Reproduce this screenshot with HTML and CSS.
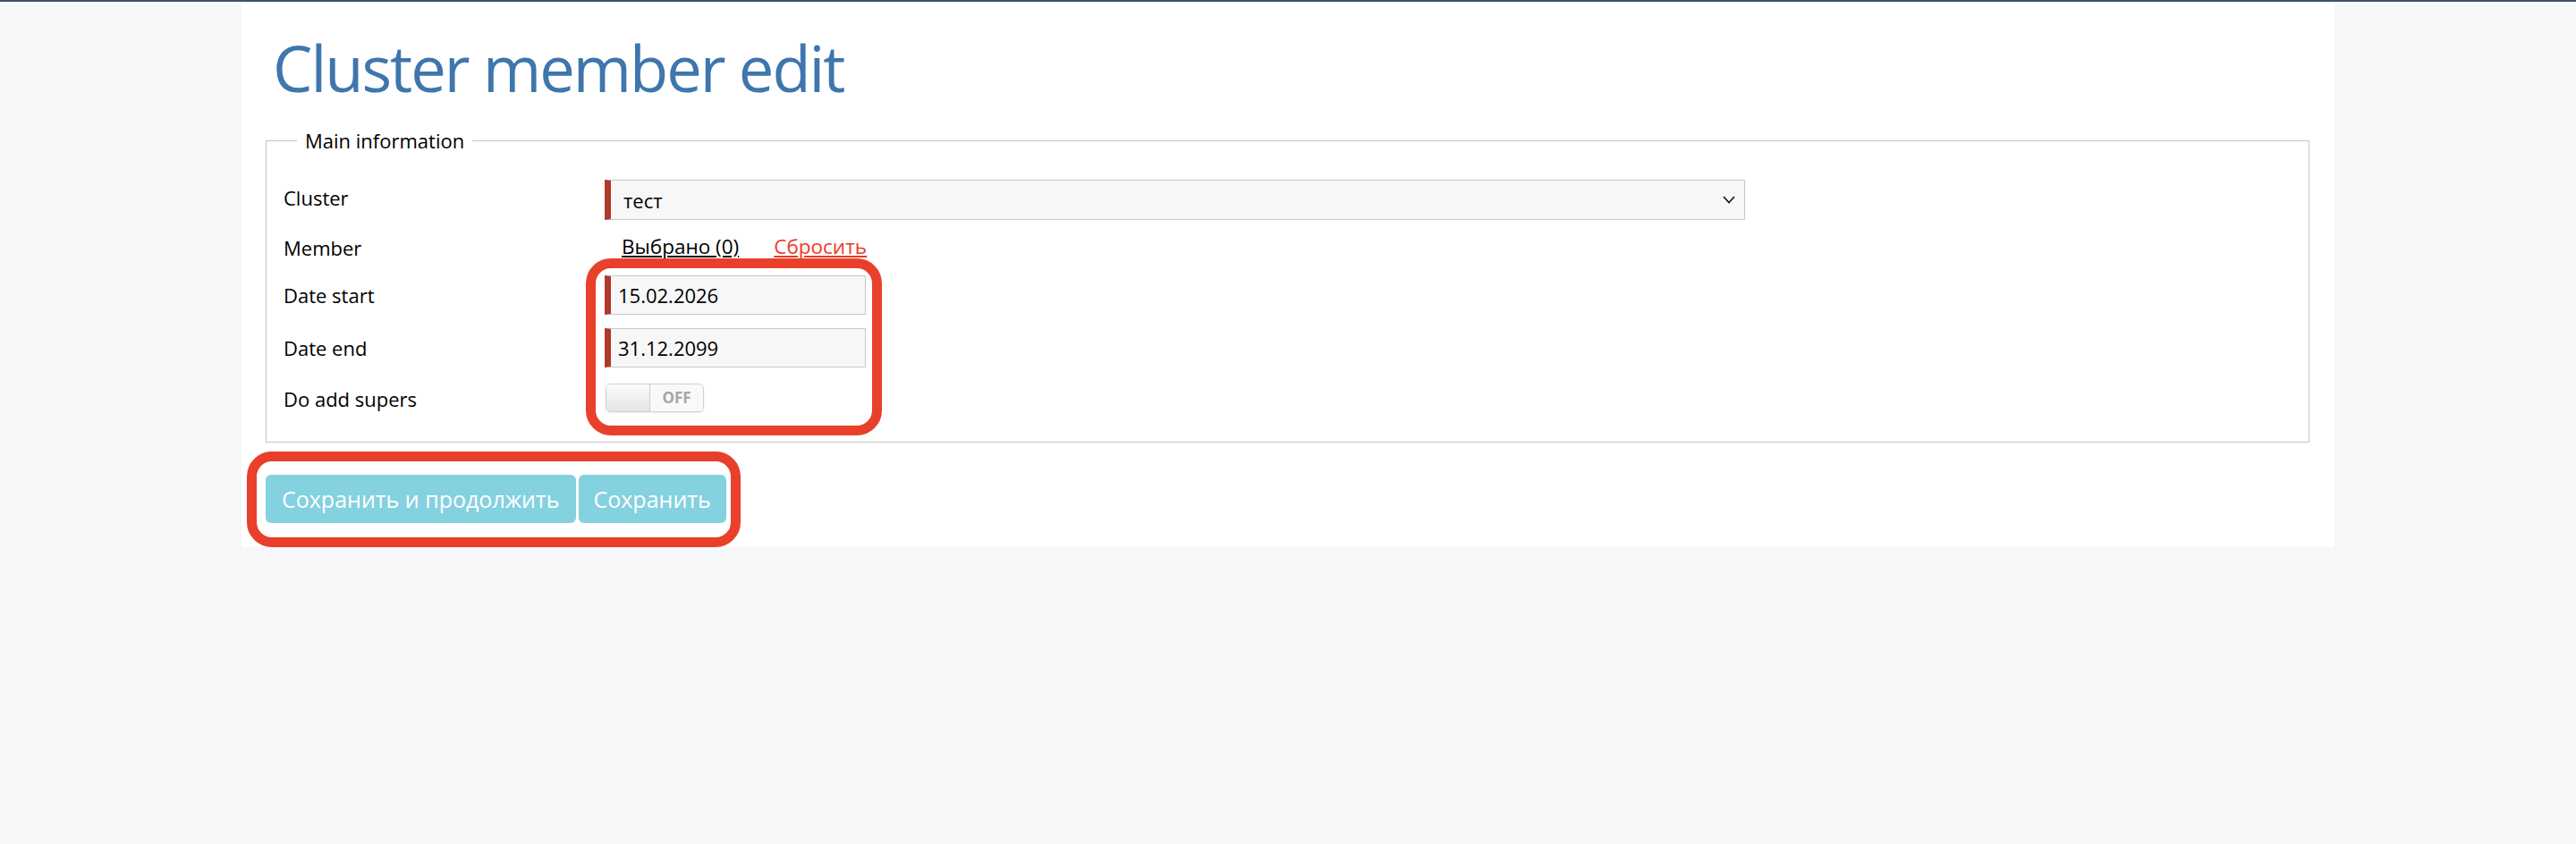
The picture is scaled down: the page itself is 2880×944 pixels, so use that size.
FILE: index.html
```html
<!DOCTYPE html>
<html lang="ru">
<head>
    <meta charset="UTF-8">
    <title>Cluster member edit</title>
    <link rel="stylesheet" href="styles.css">
</head>
<body>
<div class="page">
    <h1 class="title">Cluster member edit</h1>
    <form class="form">
        <fieldset class="group">
            <legend>Main information</legend>
            <div class="rows">
                <div class="row row-select">
                    <label>Cluster</label>
                    <div class="select">
                        <span>тест</span>
                        <svg width="14" height="9" viewBox="0 0 14 9"><polyline points="1,1 7,7.5 13,1" fill="none" stroke="#111" stroke-width="1.6"/></svg>
                    </div>
                </div>
                <div class="row row-member">
                    <label>Member</label>
                    <div class="links">
                        <a href="javascript:">Выбрано (0)</a>
                        <a class="reset" href="javascript:">Сбросить</a>
                    </div>
                </div>
                <div class="row">
                    <label>Date start</label>
                    <input class="date" type="text" value="15.02.2026">
                </div>
                <div class="row">
                    <label>Date end</label>
                    <input class="date" type="text" value="31.12.2099">
                </div>
                <div class="row row-switch">
                    <label>Do add supers</label>
                    <div class="switch">
                        <span class="knob"></span>
                        <span class="state">OFF</span>
                    </div>
                </div>
            </div>
        </fieldset>
        <div class="actions">
            <button class="btn" type="button">Сохранить и продолжить</button>
            <button class="btn btn-save" type="button">Сохранить</button>
        </div>
    </form>
    <div class="mark mark-dates"></div>
    <div class="mark mark-actions"></div>
</div>
</body>
</html>
```
FILE: styles.css
```css
* {
    box-sizing: border-box;
}

body {
    margin: 0;
    background: #f5f7f9;
    border-top: 2px solid #3f5168;
    font-family: "Open Sans", "Noto Sans", sans-serif;
    color: #000;
}

.page {
    position: relative;
    width: 2340px;
    margin: 0 auto;
    padding: 34px 28px 27px 27px;
    background: #fff;
}

.title {
    margin: 0 0 0 8px;
    font-size: 70.5px;
    font-weight: 400;
    line-height: 80px;
    letter-spacing: -2px;
    color: #3e76ad;
}

.group {
    min-width: 0;
    margin: 26px 0 0;
    padding: 29px 19px 32px;
    border: 1px solid #c4c4c4;
}

.group legend {
    margin-left: 15px;
    padding: 0 9px;
    font-size: 22px;
    line-height: 30px;
}

.rows {
    display: flex;
    flex-direction: column;
    gap: 15px;
}

.row {
    display: flex;
    align-items: center;
}

.row label {
    width: 359px;
    flex-shrink: 0;
    font-size: 22px;
    line-height: 32px;
}

.row-select label {
    margin-top: -5px;
}

.select {
    display: flex;
    align-items: center;
    justify-content: space-between;
    width: 1275px;
    height: 45px;
    padding: 0 10px 0 14px;
    background: #f7f7f7;
    border: 1px solid #c8c8c8;
    border-left: 7px solid #b0392b;
    font-size: 22px;
}

.row-member {
    height: 32px;
}

.links {
    display: flex;
    gap: 39px;
    padding-left: 19px;
    margin-top: -4px;
    font-size: 22.5px;
}

.links a {
    color: #000;
    text-decoration: underline;
}

.links .reset {
    color: #ea3a25;
}

.date {
    width: 292px;
    height: 44px;
    padding: 0 0 0 8px;
    background: #f7f7f7;
    border: 1px solid #c8c8c8;
    border-left: 7px solid #b0392b;
    font-family: inherit;
    font-size: 22px;
    color: #000;
}

.row-switch {
    margin-top: 1px;
}

.row-switch label {
    margin-top: 3px;
}

.switch {
    display: flex;
    width: 110px;
    height: 32px;
    margin-left: 1px;
    border: 1px solid #d2d2d2;
    border-radius: 5px;
    overflow: hidden;
    box-shadow: 0 1px 2px rgba(0, 0, 0, 0.08);
}

.knob {
    width: 49px;
    background: linear-gradient(#fbfbfb, #e4e4e4);
    border-right: 1px solid #cfcfcf;
}

.state {
    flex: 1;
    display: flex;
    align-items: center;
    justify-content: center;
    background: #f9f9f9;
    font-size: 17px;
    font-weight: 700;
    color: #a6a6a6;
}

.actions {
    display: flex;
    gap: 3px;
    margin-top: 36px;
}

.btn {
    height: 54px;
    padding: 0 18px;
    border: 0;
    border-radius: 6px;
    background: #84d1e0;
    font-family: inherit;
    font-size: 25px;
    color: #fff;
}

.btn-save {
    padding: 0 17px;
}

.mark {
    position: absolute;
    border: 11px solid #e8402a;
    border-radius: 28px;
}

.mark-dates {
    left: 385px;
    top: 287px;
    width: 331px;
    height: 198px;
}

.mark-actions {
    left: 6px;
    top: 503px;
    width: 552px;
    height: 107px;
}
```
